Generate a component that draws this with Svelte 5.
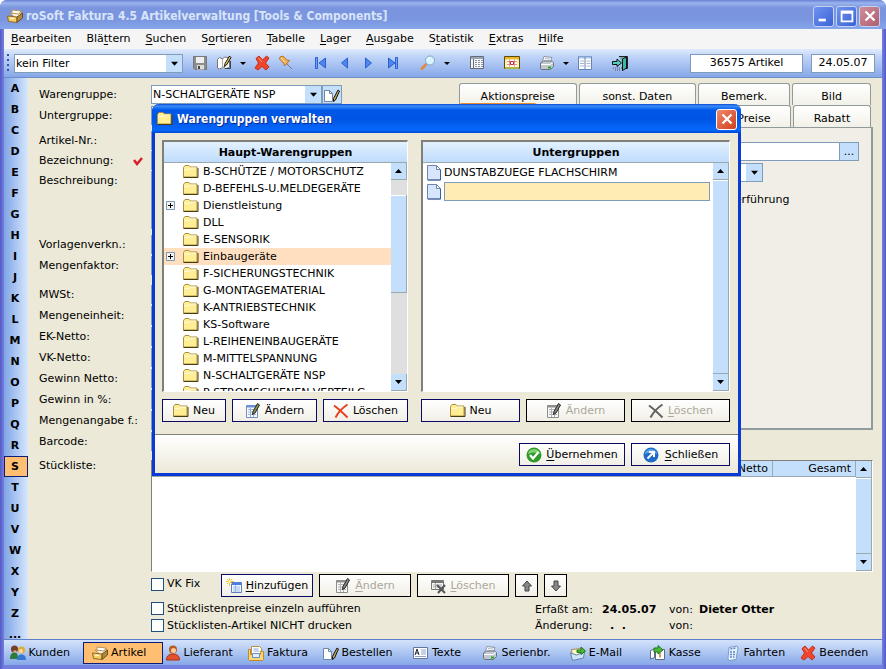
<script>
  const menus = ['&Bearbeiten', 'Blä&ttern', '&Suchen', 'S&ortieren', '&Tabelle', '&Lager', '&Ausgabe', 'S&tatistik', '&Extras', '&Hilfe'];

  const tools = [
    { icon: 'save', title: 'Speichern' },
    { icon: 'book', title: 'Bearbeiten', drop: true },
    { icon: 'cross', title: 'Löschen' },
    { icon: 'pin', title: 'Anheften' },
    { icon: 'first', title: 'Erster', group: true },
    { icon: 'prev', title: 'Zurück' },
    { icon: 'next', title: 'Weiter' },
    { icon: 'last', title: 'Letzter' },
    { icon: 'search', title: 'Suchen', group: true, drop: true },
    { icon: 'list', title: 'Liste', group: true },
    { icon: 'calendar', title: 'Kalender', group: true },
    { icon: 'print', title: 'Drucken', group: true, drop: true },
    { icon: 'columns', title: 'Tabelle' },
    { icon: 'exit', title: 'Beenden', group: true }
  ];

  const letters = [...'ABCDEFGHIJKLMNOPQRSTUVWXYZ', '...'];

  const fieldGroups = [
    [{ id: 'untergruppe', label: 'Untergruppe:' }],
    [
      { id: 'artikelnr', label: 'Artikel-Nr.:' },
      { id: 'bezeichnung', label: 'Bezeichnung:', required: true },
      { id: 'beschreibung', label: 'Beschreibung:', area: true }
    ],
    [
      { id: 'vorlage', label: 'Vorlagenverkn.:' },
      { id: 'faktor', label: 'Mengenfaktor:' }
    ],
    [
      { id: 'mwst', label: 'MWSt:' },
      { id: 'einheit', label: 'Mengeneinheit:' },
      { id: 'ek', label: 'EK-Netto:' },
      { id: 'vk', label: 'VK-Netto:' },
      { id: 'gewinn', label: 'Gewinn Netto:' },
      { id: 'prozent', label: 'Gewinn in %:' },
      { id: 'menge', label: 'Mengenangabe f.:' },
      { id: 'barcode', label: 'Barcode:' }
    ]
  ];

  const tree = [
    { name: 'B-SCHÜTZE / MOTORSCHUTZ' },
    { name: 'D-BEFEHLS-U.MELDEGERÄTE' },
    { name: 'Dienstleistung', children: true },
    { name: 'DLL' },
    { name: 'E-SENSORIK' },
    { name: 'Einbaugeräte', children: true },
    { name: 'F-SICHERUNGSTECHNIK' },
    { name: 'G-MONTAGEMATERIAL' },
    { name: 'K-ANTRIEBSTECHNIK' },
    { name: 'KS-Software' },
    { name: 'L-REIHENEINBAUGERÄTE' },
    { name: 'M-MITTELSPANNUNG' },
    { name: 'N-SCHALTGERÄTE NSP' },
    { name: 'P-STROMSCHIENEN-VERTEILG.' }
  ];

  const modules = [
    { icon: 'people', label: 'Kunden' },
    { icon: 'box', label: 'Artikel' },
    { icon: 'person', label: 'Lieferant' },
    { icon: 'invoice', label: 'Faktura' },
    { icon: 'pencil', label: 'Bestellen' },
    { icon: 'text', label: 'Texte' },
    { icon: 'print', label: 'Serienbr.' },
    { icon: 'mail', label: 'E-Mail' },
    { icon: 'cash', label: 'Kasse' },
    { icon: 'phone', label: 'Fahrten' },
    { icon: 'cross', label: 'Beenden' }
  ];

  let letter = 'S';
  let module = 'Artikel';
  let group = 'Einbaugeräte';
  let showDialog = true;

  function closeDialog() {
    showDialog = false;
  }

  // "S&ortieren" -> ['S', 'o', 'rtieren']
  function split(text) {
    const at = text.indexOf('&');
    if (at < 0) return [text, '', ''];
    return [text.slice(0, at), text[at + 1], text.slice(at + 2)];
  }
</script>

{#snippet mnemonic(text)}
  {@const parts = split(text)}
  <span>{parts[0]}{#if parts[1]}<u>{parts[1]}</u>{/if}{parts[2]}</span>
{/snippet}

{#snippet icon(name)}
  <svg class="icon" viewBox="0 0 16 16" width="16" height="16" aria-hidden="true">
    {#if name === 'save'}
      <path d="M1.5 1.5h13v13H3l-1.500-1.500z" fill="#8d8d8d" stroke="#777" />
      <path d="M4 2h8v6H4z" fill="#eee" />
      <path d="M5 10h7v4.500H5z" fill="#ddd" />
      <path d="M6 11h2v3H6z" fill="#444" />
    {:else if name === 'book'}
      <path d="M1.500 4.500l2-2 3 1.500 2-2 5 1v9.500l-4 1-2-1.500-4 2-2-1z" fill="#fff" stroke="#777" />
      <path d="M6.500 4v9" stroke="#aaa" />
      <path d="M13.500 1L9 8.500l-.5 3 2-1.500L15 2.500z" fill="#e8c860" stroke="#111" />
      <path d="M9 13.500h5.500V6" stroke="#345" fill="none" />
    {:else if name === 'cross'}
      <path d="M2 3.500L5 1l3.500 4L12.500 1 15 3l-3.500 5 3.500 4-3 3-4-3.500L4 15l-3-2 3.500-5z" fill="#f0452a" stroke="#c3301c" />
      <path d="M4.500 3l3.500 4" stroke="#ff9c86" />
    {:else if name === 'pin'}
      <path d="M8 8l6 6" stroke="#777" />
      <path d="M2 2l3-1 3.500 4 3 .5-5 5.500-1-3L1.500 4z" fill="#f3b25a" stroke="#b97420" />
      <path d="M3 3l4 4" stroke="#ffe3b0" />
    {:else if name === 'first'}
      <path d="M2.500 2.500h2v11h-2z" fill="#74a0f0" stroke="#2d5fd0" />
      <path d="M12.500 3v10L6 8z" fill="#4f86ee" stroke="#2d5fd0" />
    {:else if name === 'prev'}
      <path d="M10.500 3v10L4.500 8z" fill="#4f86ee" stroke="#2d5fd0" />
    {:else if name === 'next'}
      <path d="M4.500 3v10l6-5z" fill="#4f86ee" stroke="#2d5fd0" />
    {:else if name === 'last'}
      <path d="M3.500 3v10L10 8z" fill="#4f86ee" stroke="#2d5fd0" />
      <path d="M10.500 2.500h2v11h-2z" fill="#74a0f0" stroke="#2d5fd0" />
    {:else if name === 'search'}
      <path d="M1 14.500l5.500-5.500" stroke="#e08a3c" stroke-width="2.500" />
      <circle cx="10" cy="5.500" r="4.500" fill="#d9f3fd" stroke="#7da6c4" />
      <path d="M7.500 5a3 3 0 0 1 3-2.500" stroke="#fff" fill="none" />
    {:else if name === 'list'}
      <path d="M1.500 1.500h13v12h-13z" fill="#f5f5f5" stroke="#626a78" />
      <path d="M2 3h12" stroke="#9aa4b4" stroke-width="2" />
      <path d="M4.500 4v9" stroke="#626a78" />
      <path d="M6 5.500h8M6 7.500h8M6 9.500h8M6 11.500h8" stroke="#8a94a0" stroke-dasharray="2 1" />
    {:else if name === 'calendar'}
      <path d="M.5 1.500h15v12H.5z" fill="#fff3b0" stroke="#5c4a10" />
      <path d="M1 2h14v2.500H1z" fill="#e8b820" />
      <path d="M3 4.500h10v7H3z" fill="#fff" />
      <path d="M3 6.500h10M3 9.500h10M5.500 4.500v7M10.500 4.500v7" stroke="#e09090" />
      <path d="M6.500 6.500h3v3h-3z" fill="#fff" stroke="#c33" />
      <path d="M1 13h14" stroke="#b0b840" stroke-width="2" />
    {:else if name === 'print'}
      <path d="M5 1.500l8 1-2 5H3z" fill="#fff" stroke="#8a93a0" />
      <path d="M6 3.500l5 .5M5.500 5.500l5 .5" stroke="#b4bcc8" />
      <path d="M1.500 8l3-2h8l2 1.500v4l-3 3h-9l-1-1.500z" fill="#c3c8d0" stroke="#6b7380" />
      <path d="M2 9.500h9l3-2" stroke="#fff" fill="none" />
      <path d="M9 11.500h3v2H9z" fill="#22a522" />
    {:else if name === 'columns'}
      <path d="M1.500 1.500h13v13h-13z" fill="#fff" stroke="#6484b4" />
      <path d="M2 2.500h12" stroke="#a8c4ee" stroke-width="2" />
      <path d="M8 2v12" stroke="#6484b4" />
      <path d="M3 6h4M3 8.500h4M3 11h4M9.500 6h4M9.500 8.500h4M9.500 11h4" stroke="#a9b7cc" />
    {:else if name === 'exit'}
      <path d="M7 1.500h8.500v12H13" fill="#7aa" stroke="#222" />
      <path d="M10.500 4l4-2v11l-4 2.500z" fill="#38b8a8" stroke="#111" />
      <path d="M.5 6.500H5V4l4.500 4L5 11.500V9.500H.5z" fill="#4fd0c0" stroke="#111" />
      <path d="M1 13h9M3 15h6" stroke="#555" stroke-dasharray="1 1" />
    {:else if name === 'folder'}
      <path d="M.5 3.500l1.500-2h4l1.500 1.500h6.500v10H.5z" fill="#ffee94" stroke="#a89040" />
      <path d="M1.500 5.500h5l1-1.500H13" stroke="#fffbe0" fill="none" />
      <path d="M.5 13.500h14.500V4" stroke="#4a3e10" fill="none" />
    {:else if name === 'page'}
      <path d="M1.500.5h9l4 4v10.500h-13z" fill="#d8e6fb" stroke="#6b85b0" />
      <path d="M10.500.5v4h4z" fill="#fff" stroke="#6b85b0" />
      <path d="M14.500 5v10H2" stroke="#3b5c94" fill="none" />
    {:else if name === 'edit'}
      <path d="M1.500 2.500h11v12h-11z" fill="#f4f8ff" stroke="#7690b8" />
      <path d="M1.500 2h9v2.500h-9z" fill="#6b92d6" />
      <path d="M3 6.500h6M3 9h8M3 11.500h8M5.500 5v9M8.500 9v5" stroke="#9db4d8" />
      <path d="M12.500.5l2 1.500-4.500 8-2.500 1.500.5-3z" fill="#8b9440" stroke="#222" />
    {:else if name === 'redx'}
      <path d="M1 2.500C6 6 10 10 14.500 14.500M14.500 1.500C9 5 5 10 2.500 14.500" stroke="#e8401c" stroke-width="2" fill="none" />
    {:else if name === 'ok'}
      <circle cx="8" cy="8" r="7.500" fill="#2f9a2c" />
      <path d="M2 7a6 5 0 0 1 12 0 9 6 0 0 0-12 0z" fill="#7fd070" />
      <path d="M4 8l3 3.500L12.500 5" stroke="#fff" stroke-width="2.200" fill="none" />
    {:else if name === 'leave'}
      <circle cx="8" cy="8" r="7.500" fill="#1e6cc4" />
      <path d="M2 7a6 5 0 0 1 12 0 9 6 0 0 0-12 0z" fill="#5ea5ea" />
      <path d="M4.500 11.500l6-6M6 5h5v5" stroke="#fff" stroke-width="2" fill="none" />
    {:else if name === 'add'}
      <path d="M5.500 4.500h10v10h-10z" fill="#f4f8ff" stroke="#5c7fbd" />
      <path d="M5.500 4.500h10v2.500h-10z" fill="#4a7ee0" />
      <path d="M7 9h7M7 11h7M7 13h7M9.500 7v7" stroke="#9db9ea" />
      <path d="M3.500 0v8M0 3.500h8M1 1l5 5M6 1L1 6" stroke="#f0c430" />
      <circle cx="3.500" cy="3.500" r="1.500" fill="#fff3a0" />
    {:else if name === 'remove'}
      <path d="M1.500 2.500h12v9h-12z" fill="#f5f5f5" stroke="#777" />
      <path d="M2 4h11" stroke="#777" stroke-width="2" />
      <path d="M3 7h9M3 9h9M5.500 5v6" stroke="#aaa" />
      <path d="M7 7l8 8M15 7l-7 8" stroke="#555" stroke-width="2" />
    {:else if name === 'up'}
      <path d="M8 3l4.500 5h-2.500v5H6V8H3.500z" fill="#888" stroke="#444" />
    {:else if name === 'down'}
      <path d="M8 13L3.500 8H6V3h4v5h2.500z" fill="#888" stroke="#444" />
    {:else if name === 'pencil'}
      <path d="M.5 3.500h5l3 3v8h-8z" fill="#fff" stroke="#6c86a8" />
      <path d="M5.500 3.500v3h3" fill="none" stroke="#6c86a8" />
      <path d="M14 3l1.500 1-4 9-2 1.500v-3z" fill="#c8a850" stroke="#111" />
    {:else if name === 'box'}
      <path d="M5 2l9 1v4l-9-1z" fill="#fff" stroke="#b8945a" />
      <path d="M3 5l9 1 2-3v6l-3 3z" fill="#fdf4dc" stroke="#b8945a" />
      <path d="M.5 8l9.500 1v5.500L1.500 13.500z" fill="#f5cf62" stroke="#8d6a2a" />
      <path d="M10 9l5.500-4v5L10 14.500z" fill="#b08840" stroke="#705020" />
      <path d="M3 10l4 .5" stroke="#fff" />
    {:else if name === 'people'}
      <circle cx="4.500" cy="4" r="3.500" fill="#704028" />
      <circle cx="11.500" cy="5" r="3.500" fill="#e0ac2c" />
      <circle cx="11" cy="6" r="2" fill="#ffd9b0" />
      <path d="M0 14c0-5 2-6.500 4.500-6.500S8 9 8 14z" fill="#2d7b3d" />
      <path d="M7 15c0-4 2-5.500 4.500-5.500S16 11 16 15z" fill="#3578d0" />
      <path d="M3.500 5.500h3v2h-3z" fill="#e9b48c" />
    {:else if name === 'person'}
      <circle cx="8" cy="4.500" r="4" fill="#b85c20" />
      <circle cx="8.500" cy="5.500" r="2.500" fill="#ffce9c" />
      <path d="M1.500 15c0-4.500 3-6 6.500-6s6.500 1.500 6.500 6z" fill="#e6502a" stroke="#a83214" />
    {:else if name === 'invoice'}
      <path d="M3.500 1.500h8l2 2v10h-10z" fill="#fff" stroke="#c09038" />
      <path d="M5.500 4h5M5.500 6h6" stroke="#8aa8dc" />
      <path d="M.5 4.500h2v5h10v-3h3v8l-1 1H1.500l-1-1z" fill="#f8d878" stroke="#c08a24" />
      <path d="M4.500 8.500h7v4h-7z" fill="#e7effc" stroke="#6b8cc4" />
    {:else if name === 'text'}
      <path d="M.5 2.500h14v11H.5z" fill="#fff" stroke="#64789c" />
      <path d="M2 10l2-6 2 6M3 8h2.500" stroke="#223" fill="none" />
      <path d="M8 5h5M8 7h5M8 9h5M2 11.500h11" stroke="#8fa4cc" />
    {:else if name === 'mail'}
      <path d="M1.500 4.500l10-1 2 8-11 3z" fill="#fff6c8" stroke="#a08a50" />
      <path d="M.5 8l6 2 8-3-1 6-11 2.500z" fill="#cfe4f8" stroke="#5f86ac" />
      <path d="M7 5h4V2l4.500 4L11 9.500V7.500H7z" fill="#4bb838" stroke="#1c7818" />
    {:else if name === 'cash'}
      <path d="M.5 5.500l4-1.500v8.500l-4 1.500zM5.500 4.500h9v10h-9z" fill="#fff" stroke="#5c6c84" />
      <path d="M10 7.500v5" stroke="#c8a860" stroke-width="2" />
      <path d="M4 7V3h4V.5L13 5 8 9V7z" fill="#4bb838" stroke="#1c7818" />
    {:else if name === 'phone'}
      <path d="M4 2.500l8-1.500 1 2-2 11.500-7 1-1-2z" fill="#e8f2fc" stroke="#7c9cc8" />
      <path d="M5.500 4l5-1M5 7h5M5 9.500h5M5 12h4.500" stroke="#5888cc" stroke-dasharray="2 1" stroke-width="1.500" />
    {/if}
  </svg>
{/snippet}

{#snippet scrollbar(before, after)}
  <div class="scrollbar">
    <button type="button" aria-label="Nach oben"><svg viewBox="0 0 7 4" width="7" height="4"><path d="M0 4h7L3.500 0z" /></svg></button>
    <div class="scrollbar__track" style="padding: {before}px 0 {after}px">
      <div class="scrollbar__thumb"></div>
    </div>
    <button type="button" aria-label="Nach unten"><svg viewBox="0 0 7 4" width="7" height="4"><path d="M0 0h7L3.500 4z" /></svg></button>
  </div>
{/snippet}

<div class="window">
  <header class="caption">
    {@render icon('box')}
    <h1>roSoft Faktura 4.5 Artikelverwaltung [Tools &amp; Components]</h1>
    <button type="button" class="caption__button" aria-label="Minimieren">
      <svg viewBox="0 0 20 20" width="18" height="18"><path d="M4 13h8v3H4z" fill="#fff" /></svg>
    </button>
    <button type="button" class="caption__button" aria-label="Maximieren">
      <svg viewBox="0 0 20 20" width="18" height="18"><path d="M4 5h12v11H4zM4 6.500h12" fill="none" stroke="#fff" stroke-width="2" /></svg>
    </button>
    <button type="button" class="caption__button caption__button--faded" aria-label="Beenden">
      <svg viewBox="0 0 20 20" width="18" height="18"><path d="M5 5l10 10M15 5L5 15" stroke="#fff" stroke-width="2.500" /></svg>
    </button>
  </header>

  <nav class="menubar">
    {#each menus as item}
      <button type="button">{@render mnemonic(item)}</button>
    {/each}
  </nav>

  <div class="toolbar">
    <span class="grip"></span>
    <select class="combo toolbar__filter" aria-label="Filter"><option>kein Filter</option></select>
    {#each tools as tool}
      <button type="button" class="tool" class:tool--group={tool.group} title={tool.title}>{@render icon(tool.icon)}</button>
      {#if tool.drop}
        <button type="button" class="tool tool--drop" aria-label="{tool.title} Menü"><svg viewBox="0 0 6 3" width="6" height="3"><path d="M0 0h6L3 3z" /></svg></button>
      {/if}
    {/each}
    <output class="toolbar__count">36575 Artikel</output>
    <output class="toolbar__date">24.05.07</output>
  </div>

  <div class="body">
    <nav class="index">
      {#each letters as item}
        <button type="button" class:active={letter === item} on:click={() => (letter = item)}>{item}</button>
      {/each}
    </nav>

    <main class="form">
      <div class="upper">
        <div class="fields">
          <div class="fields__group">
            <div class="field">
              <label for="warengruppe">Warengruppe:</label>
              <select id="warengruppe" class="combo field__combo"><option>N-SCHALTGERÄTE NSP</option></select>
              <button type="button" class="field__edit" aria-label="Warengruppen verwalten" on:click={() => (showDialog = true)}>{@render icon('pencil')}</button>
            </div>
          </div>
          {#each fieldGroups as items}
            <div class="fields__group">
              {#each items as field}
                <div class="field" class:field--area={field.area}>
                  <label for={field.id}>
                    {field.label}
                    {#if field.required}
                      <svg class="required" viewBox="0 0 10 10" width="10" height="10"><path d="M1 4l3 4 5-6" stroke="#d8202c" stroke-width="2.500" fill="none" /></svg>
                    {/if}
                  </label>
                  {#if field.area}
                    <textarea id={field.id}></textarea>
                  {:else}
                    <input id={field.id} type="text" />
                  {/if}
                </div>
              {/each}
            </div>
          {/each}
        </div>

        <div class="pages">
          <div class="tabs">
            <button type="button" class="tab tab--xl">Aktionspreise</button>
            <button type="button" class="tab tab--xl">sonst. Daten</button>
            <button type="button" class="tab tab--lg">Bemerk.</button>
            <button type="button" class="tab">Bild</button>
          </div>
          <div class="tabs">
            <button type="button" class="tab tab--active" aria-label="Details"></button>
            <button type="button" class="tab" aria-label="Lager"></button>
            <button type="button" class="tab" aria-label="Texte"></button>
            <button type="button" class="tab tab--lg">VK-Preise</button>
            <button type="button" class="tab">Rabatt</button>
          </div>
          <div class="page">
            <div class="page__row">
              <input type="text" aria-label="Konto" />
              <button type="button" class="page__more">...</button>
            </div>
            <div class="page__row">
              <select class="combo page__combo" aria-label="Lager"><option></option></select>
            </div>
            <label class="page__check"><input type="checkbox" />Lagerführung</label>
          </div>
        </div>
      </div>

      <div class="parts">
        <span class="parts__label">Stückliste:</span>
        <div class="parts__list">
          <table>
            <thead>
              <tr><th aria-label="Bezeichnung"></th><th class="col-price">VK-Netto</th><th class="col-total">Gesamt</th></tr>
            </thead>
          </table>
          {@render scrollbar(0, 0)}
        </div>
      </div>

      <div class="actions">
        <label class="check check--fix"><input type="checkbox" />VK Fix</label>
        <button type="button" class="button">{@render icon('add')}{@render mnemonic('&Hinzufügen')}</button>
        <button type="button" class="button" disabled>{@render icon('edit')}{@render mnemonic('&Ändern')}</button>
        <button type="button" class="button" disabled>{@render icon('remove')}{@render mnemonic('&Löschen')}</button>
        <button type="button" class="button button--small" aria-label="Nach oben">{@render icon('up')}</button>
        <button type="button" class="button button--small" aria-label="Nach unten">{@render icon('down')}</button>
      </div>

      <div class="options">
        <div class="options__checks">
          <label class="check"><input type="checkbox" />Stücklistenpreise einzeln aufführen</label>
          <label class="check"><input type="checkbox" />Stücklisten-Artikel NICHT drucken</label>
        </div>
        <dl class="record">
          <dt>Erfaßt am:</dt><dd>24.05.07</dd><dt>von:</dt><dd>Dieter Otter</dd>
          <dt>Änderung:</dt><dd class="record__empty">.&nbsp; .</dd><dt>von:</dt><dd></dd>
        </dl>
      </div>

      {#if showDialog}
        <div class="dialog" role="dialog" aria-labelledby="dialog-title">
          <header class="dialog__caption">
            {@render icon('folder')}
            <h2 id="dialog-title">Warengruppen verwalten</h2>
            <button type="button" class="dialog__close" aria-label="Schließen" on:click={closeDialog}>
              <svg viewBox="0 0 20 20" width="18" height="18"><path d="M5 5l10 10M15 5L5 15" stroke="#fff" stroke-width="2.500" /></svg>
            </button>
          </header>

          <div class="dialog__panes">
            <section class="pane pane--main">
              <div class="list">
                <h3>Haupt-Warengruppen</h3>
                <div class="list__body">
                  <ul class="tree">
                    {#each tree as node}
                      <li class:selected={group === node.name}>
                        <button type="button" on:click={() => (group = node.name)}>
                          <span class="tree__toggle">
                            {#if node.children}
                              <svg viewBox="0 0 9 9" width="9" height="9"><path d="M.5.5h8v8h-8z" fill="#f6f4ee" stroke="#7898b5" /><path d="M2 4.500h5M4.500 2v5" stroke="#000" /></svg>
                            {/if}
                          </span>
                          {@render icon('folder')}
                          <span>{node.name}</span>
                        </button>
                      </li>
                    {/each}
                  </ul>
                  {@render scrollbar(15, 81)}
                </div>
              </div>
              <div class="pane__buttons">
                <button type="button" class="button button--new">{@render icon('folder')}<span>Neu</span></button>
                <button type="button" class="button">{@render icon('edit')}<span>Ändern</span></button>
                <button type="button" class="button">{@render icon('redx')}<span>Löschen</span></button>
              </div>
            </section>

            <section class="pane pane--sub">
              <div class="list">
                <h3>Untergruppen</h3>
                <div class="list__body">
                  <ul class="subs">
                    <li>{@render icon('page')}<span>DUNSTABZUEGE FLACHSCHIRM</span></li>
                    <li>{@render icon('page')}<input type="text" aria-label="Neue Untergruppe" /></li>
                  </ul>
                  {@render scrollbar(0, 0)}
                </div>
              </div>
              <div class="pane__buttons">
                <button type="button" class="button">{@render icon('folder')}<span>Neu</span></button>
                <button type="button" class="button" disabled>{@render icon('edit')}<span>Ändern</span></button>
                <button type="button" class="button" disabled>{@render icon('redx')}{@render mnemonic('&Löschen')}</button>
              </div>
            </section>
          </div>

          <footer class="dialog__footer">
            <button type="button" class="button button--apply" on:click={closeDialog}>{@render icon('ok')}{@render mnemonic('&Übernehmen')}</button>
            <button type="button" class="button button--close" on:click={closeDialog}>{@render icon('leave')}{@render mnemonic('&Schließen')}</button>
          </footer>
        </div>
      {/if}
    </main>
  </div>

  <nav class="modules">
    {#each modules as item}
      <button type="button" class:active={module === item.label} on:click={() => (module = item.label)}>
        {@render icon(item.icon)}<span>{item.label}</span>
      </button>
    {/each}
  </nav>
</div>

<style>
  :global(body) {
    margin: 0;
    background: #fff;
  }

  .window,
  .window button,
  .window input,
  .window select,
  .window textarea {
    box-sizing: border-box;
    font-family: "DejaVu Sans", Verdana, sans-serif;
    font-size: 11px;
    color: #000;
  }

  .window {
    display: flex;
    flex-direction: column;
    min-height: 100vh;
    padding: 0 4px 4px;
    border-radius: 7px 7px 0 0;
    background: linear-gradient(90deg, #5458c4, #7480e0 4px, #7480e0 calc(100% - 4px), #5458c4);
    line-height: 16px;
  }

  .window button {
    padding: 0;
    border: 0;
    background: none;
    line-height: 16px;
  }

  .window input,
  .window textarea {
    margin: 0;
    padding: 0 2px;
    border: 1px solid #7f9db9;
    border-radius: 0;
    background: #fff;
  }

  .window input[type="checkbox"] {
    appearance: none;
    width: 13px;
    height: 13px;
    padding: 0;
    border-color: #1c5180;
  }

  .icon {
    display: block;
    flex: none;
  }

  u {
    text-underline-offset: 2px;
  }

  h1,
  h2,
  h3 {
    margin: 0;
  }

  .combo {
    appearance: none;
    height: 19px;
    padding: 0 18px 0 1px;
    border: 1px solid #7f9db9;
    border-radius: 0;
    background: #fff url("data:image/svg+xml,%3Csvg xmlns='http://www.w3.org/2000/svg' width='16' height='18'%3E%3Cpath d='M0 0h16v18H0z' fill='%23c4dffc'/%3E%3Cpath d='M5 7h7L8.500 11z'/%3E%3C/svg%3E") right center no-repeat;
  }

  .caption {
    display: flex;
    align-items: center;
    gap: 2px;
    height: 29px;
    margin: 0 -4px;
    padding: 3px 6px 0 7px;
    box-sizing: border-box;
    border-radius: 7px 7px 0 0;
    background: linear-gradient(#6a7fd4, #9ab4ee 3px, #7a94de 8px, #7b96e0 20px, #86a6ea);
  }

  .caption h1 {
    flex: 1;
    margin-left: 1px;
    color: #d8e4f8;
    font: bold 12px/18px "DejaVu Sans Condensed", "Trebuchet MS", sans-serif;
  }

  .window .caption__button,
  .window .dialog__close {
    display: flex;
    align-items: center;
    justify-content: center;
    width: 21px;
    height: 21px;
    border: 1px solid #c4d2f4;
    border-radius: 3px;
    background: linear-gradient(135deg, #6f93ee, #3a62d8);
  }

  .window .caption__button--faded {
    background: linear-gradient(135deg, #cf8e98, #b05e70);
  }

  .menubar {
    display: flex;
    align-items: center;
    gap: 15px;
    height: 20px;
    padding-left: 7px;
    background: #f5f5f5;
  }

  .toolbar {
    display: flex;
    align-items: center;
    gap: 8px;
    height: 28px;
    padding: 0 7px 0 3px;
    border-bottom: 1px solid #6f8cc4;
    background: linear-gradient(#dfeafc, #bdd2f8 30%, #86a8e8);
  }

  .grip {
    width: 2px;
    height: 18px;
    background: repeating-linear-gradient(#33559c 0 2px, transparent 2px 5px);
  }

  .toolbar .toolbar__filter {
    width: 169px;
    margin: 0 1px 0 -3px;
  }

  .tool--group {
    margin-left: 11px;
  }

  .window .tool--drop {
    display: flex;
    align-items: center;
  }

  .toolbar output {
    box-sizing: border-box;
    height: 19px;
    border: 1px solid #7f9db9;
    background: #fff;
    text-align: center;
  }

  .toolbar__count {
    width: 113px;
    margin-left: auto;
  }

  .toolbar__date {
    width: 64px;
  }

  .body {
    display: flex;
    flex: 1;
    background: #ece9d8;
  }

  .index {
    display: flex;
    flex: none;
    flex-direction: column;
    width: 24px;
    max-height: 561px;
    overflow: hidden;
    background: linear-gradient(90deg, #7ea4e6, #d8e8fd);
  }

  .index button {
    flex: none;
    height: 21px;
    padding-right: 2px;
    font-weight: bold;
  }

  .index button.active {
    border: 1px solid #0c1c78;
    background: #ffbe70;
  }

  .form {
    position: relative;
    flex: 1;
    padding: 5px 9px 0 11px;
  }

  .upper {
    display: flex;
    height: 373px;
  }

  .fields {
    width: 420px;
    padding-top: 2px;
  }

  .fields__group + .fields__group {
    padding-bottom: 4px;
  }

  .fields__group:nth-child(4) {
    padding-bottom: 8px;
  }

  .field {
    display: flex;
    height: 21px;
  }

  .field label {
    display: flex;
    align-items: center;
    flex: none;
    width: 112px;
    height: 20px;
    white-space: nowrap;
  }

  .field input {
    width: 191px;
    height: 19px;
  }

  .fields__group:nth-child(3) .field {
    height: 20px;
  }

  .fields__group:nth-child(3) .field--area {
    height: 60px;
  }

  .field textarea {
    width: 191px;
    height: 58px;
    resize: none;
  }

  .required {
    margin: 0 8px 0 auto;
  }

  .field__combo {
    width: 171px;
  }

  .window .field__edit {
    width: 20px;
    height: 19px;
    padding-left: 1px;
    border: 1px solid #7f9db9;
    background: #c4dffc;
  }

  .pages {
    display: flex;
    flex: 1;
    flex-direction: column;
    margin-bottom: 26px;
  }

  .tabs {
    display: flex;
    gap: 2px;
    padding-right: 2px;
  }

  .window .tab {
    flex: 79 1 0;
    height: 22px;
    padding-top: 5px;
    border: 1px solid #919b9c;
    border-bottom: 0;
    border-radius: 3px 3px 0 0;
    background: linear-gradient(#fff, #f2f1e8);
    white-space: nowrap;
  }

  .window .tab--xl {
    flex-grow: 119;
  }

  .window .tab--lg {
    flex-grow: 93;
  }

  .window .tab--active {
    height: 24px;
    margin-top: -2px;
    border-top: 2px solid #e68b2c;
  }

  .page {
    flex: 1;
    padding: 14px 12px 0 100px;
    border: 1px solid #919b9c;
    border-width: 1px 2px 2px 1px;
    background: #f0eee6;
  }

  .page__row {
    display: flex;
    height: 21px;
  }

  .page__row input {
    flex: 1;
    height: 19px;
  }

  .window .page__more {
    width: 20px;
    height: 19px;
    margin-left: -1px;
    border: 1px solid #7f9db9;
    background: #c4dffc;
  }

  .page__combo {
    width: 203px;
  }

  .page__check {
    display: flex;
    align-items: center;
    gap: 4px;
    padding: 8px 0 0 138px;
  }

  .parts {
    display: flex;
  }

  .parts__label {
    flex: none;
    width: 112px;
    padding-top: 2px;
  }

  .parts__list {
    display: flex;
    flex: 1;
    align-items: flex-start;
    height: 112px;
    margin-top: 4px;
    box-sizing: border-box;
    border: 1px solid #fff;
    border-top-color: #808078;
    border-left-color: #808078;
    background: #fff;
  }

  table {
    flex: 1;
    border-collapse: collapse;
    table-layout: fixed;
  }

  th {
    height: 15px;
    padding: 0 4px;
    border-right: 1px solid #9aa8b0;
    border-bottom: 1px solid #9aa8b0;
    background: #c4dffc;
    font-weight: normal;
    line-height: 15px;
    text-align: right;
  }

  .col-price,
  .col-total {
    width: 74px;
  }

  .scrollbar {
    display: flex;
    flex: none;
    flex-direction: column;
    align-self: stretch;
    width: 16px;
    background: #e0dfe0;
  }

  .window .scrollbar button {
    display: flex;
    align-items: center;
    justify-content: center;
    flex: none;
    height: 17px;
    box-sizing: border-box;
    border: 1px solid #9aa8b0;
    border-width: 0 1px 1px 0;
    background: #c4dffc;
  }

  .scrollbar__track {
    display: flex;
    flex: 1;
  }

  .scrollbar__thumb {
    flex: 1;
    border: 1px solid #9aa8b0;
    border-width: 0 1px 1px 0;
    box-shadow: inset 0 1px #fff;
    background: #c4dffc;
  }

  .window .button {
    display: flex;
    align-items: center;
    justify-content: center;
    gap: 4px;
    width: 92px;
    height: 23px;
    border: 1px solid #0a0a66;
    background: linear-gradient(#fff, #f1efe6);
  }

  .window .button:disabled {
    border-color: #000;
    color: #aca899;
  }

  .button:disabled .icon {
    filter: grayscale(1);
  }

  .window .button--small {
    width: 23px;
    border-color: #000;
  }

  .actions {
    display: flex;
    gap: 6px;
    padding: 2px 0 0 112px;
  }

  .check {
    display: flex;
    align-items: center;
    gap: 3px;
    height: 17px;
  }

  .check--fix {
    width: 64px;
    height: 20px;
  }

  .options {
    display: flex;
    padding: 3px 0 5px 112px;
  }

  .options__checks {
    width: 384px;
  }

  .record {
    display: grid;
    grid-template-columns: 67px 67px 30px auto;
    align-content: start;
    margin: 2px 0 0;
    line-height: 16px;
  }

  .record dd {
    margin: 0;
    font-weight: bold;
  }

  .record .record__empty {
    padding-left: 8px;
  }

  .dialog {
    position: absolute;
    top: 26px;
    left: 124px;
    box-sizing: border-box;
    width: 589px;
    border: solid #0a3ad4;
    border-width: 0 3px 3px;
    border-radius: 7px 7px 0 0;
    background: #ece9d8;
  }

  .dialog__caption {
    display: flex;
    align-items: center;
    gap: 4px;
    height: 29px;
    margin: 0 -3px;
    padding: 1px 4px 0 5px;
    box-sizing: border-box;
    border-radius: 7px 7px 0 0;
    background: linear-gradient(#0a4ad0, #3c8cf8 2px, #0058e8 6px, #0054e3 15px, #0668fc 26px, #0048d0);
  }

  .dialog__caption h2 {
    flex: 1;
    color: #fff;
    font: bold 12px/18px "DejaVu Sans Condensed", "Trebuchet MS", sans-serif;
    text-shadow: 1px 1px #0a2a90;
  }

  .window .dialog__close {
    border-color: #fff;
    background: linear-gradient(135deg, #f0886a, #d0401c);
  }

  .dialog__panes {
    display: flex;
    gap: 13px;
    padding: 7px 8px 12px 7px;
  }

  .pane--main {
    width: 246px;
  }

  .pane--sub {
    flex: 1;
  }

  .list {
    box-sizing: border-box;
    border: 1px solid #fff;
    border-top: 2px solid #808078;
    border-left: 2px solid #808078;
    background: #fff;
  }

  .list h3 {
    height: 20px;
    border-bottom: 1px solid #9aa8b0;
    background: linear-gradient(#e2f1ff, #c0dcfc);
    font-size: 11px;
    line-height: 22px;
    text-align: center;
  }

  .list__body {
    display: flex;
    height: 228px;
    overflow: hidden;
  }

  .tree,
  .subs {
    flex: 1;
    min-width: 0;
    margin: 0;
    padding: 0;
    overflow: hidden;
    list-style: none;
  }

  .tree button {
    display: flex;
    align-items: center;
    gap: 4px;
    width: 100%;
    height: 17px;
    padding-left: 2px;
    white-space: nowrap;
  }

  .tree__toggle {
    display: flex;
    flex: none;
    width: 13px;
  }

  .tree li.selected {
    background: #ffdfc0;
  }

  .subs li {
    display: flex;
    align-items: center;
    gap: 2px;
    height: 19px;
    padding-left: 3px;
  }

  .subs input {
    flex: 1;
    height: 19px;
    margin-right: 3px;
    background: #ffecb5;
  }

  .pane__buttons {
    display: flex;
    gap: 6px;
    margin-top: 7px;
  }

  .pane__buttons .button {
    flex: 1;
  }

  .pane__buttons .button--new {
    flex: none;
    width: 64px;
  }

  .dialog__footer {
    display: flex;
    justify-content: flex-end;
    gap: 6px;
    padding: 8px 8px 7px;
    border-top: 1px solid #808078;
    background: linear-gradient(#fff, #ece9d8);
  }

  .dialog__footer .button--apply {
    width: 106px;
  }

  .dialog__footer .button--close {
    width: 99px;
    gap: 6px;
  }

  .modules {
    display: grid;
    grid-template-columns: repeat(11, 1fr);
    height: 25px;
    padding-right: 4px;
    border-top: 1px solid #5f7fc8;
    background: linear-gradient(#d4e3fb, #86a8e8);
  }

  .modules button {
    display: flex;
    align-items: center;
    justify-content: center;
    gap: 3px;
    padding-right: 8px;
    white-space: nowrap;
  }

  .modules button.active {
    height: 22px;
    margin-top: 2px;
    border: 1px solid #0c1c78;
    background: #ffbe70;
  }
</style>
